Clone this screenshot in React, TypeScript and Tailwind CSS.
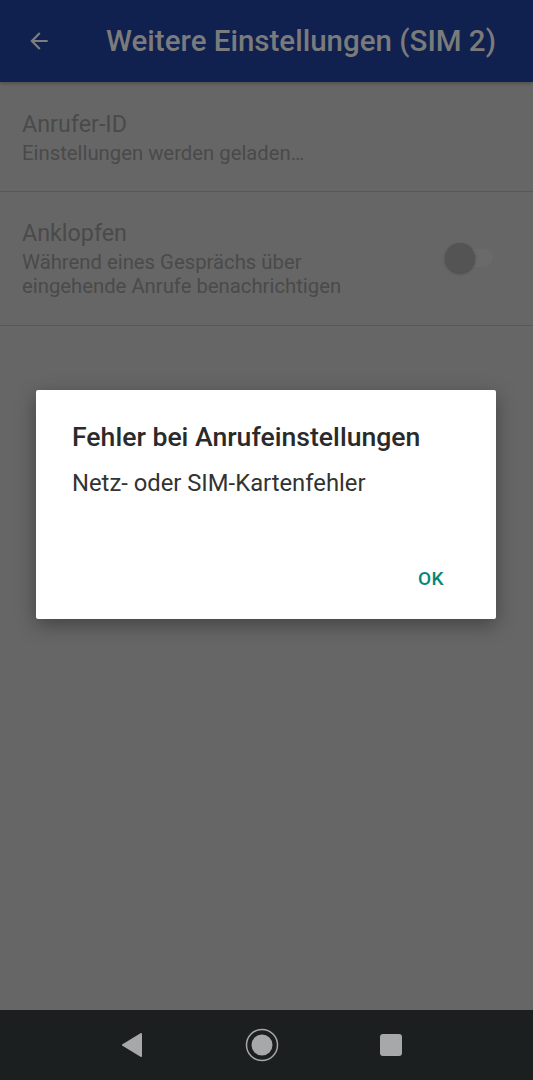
// App.tsx
// Call settings screen (SIM 2) with error dialog on top

const font = { fontFamily: "Roboto, 'Noto Sans', sans-serif" };

function SettingRow({
  title,
  summary,
  toggle,
  className,
}: {
  title: string;
  summary: string[];
  toggle?: boolean;
  className: string;
}) {
  return (
    <div className={`flex items-center border-b border-[#575757] pl-[22px] pr-[40px] ${className}`}>
      <div className="flex-1">
        <div className="text-[23.3px] leading-[30px] text-[#4a4a4a]">{title}</div>
        <div className="mt-[2px]">
          {summary.map((line) => (
            <div key={line} className="text-[20.3px] leading-[24px] text-[#4a4a4a]">
              {line}
            </div>
          ))}
        </div>
      </div>
      {toggle && (
        <div className="relative h-[18px] w-[48px] rounded-full bg-[#6a6a6a]">
          <div className="absolute left-0 top-[-6px] h-[30px] w-[30px] rounded-full bg-[#545454] shadow-[0_1px_3px_rgba(0,0,0,0.3)]" />
        </div>
      )}
    </div>
  );
}

export default function App() {
  return (
    <div className="relative flex h-[1080px] w-[533px] flex-col overflow-hidden bg-[#666666]" style={font}>
      {/* Toolbar (dimmed) */}
      <div className="flex h-[82px] items-center bg-[#10214f] shadow-[0_2px_3px_rgba(0,0,0,0.2)]">
        <svg className="ml-[26px] h-[26px] w-[26px]" viewBox="0 0 24 24" fill="#7d7d7d">
          <path d="M20 11H7.83l5.59-5.59L12 4l-8 8 8 8 1.41-1.41L7.83 13H20v-2z" />
        </svg>
        <div className="ml-[54px] whitespace-nowrap text-[29.5px] font-medium text-[#7b7b7b]">
          Weitere Einstellungen (SIM 2)
        </div>
      </div>

      <SettingRow className="pt-[27px] pb-[26px]" title="Anrufer-ID" summary={["Einstellungen werden geladen…"]} />
      <SettingRow
        className="pt-[26px] pb-[27px]"
        title="Anklopfen"
        summary={["Während eines Gesprächs über", "eingehende Anrufe benachrichtigen"]}
        toggle
      />

      <div className="flex-1" />

      {/* Navigation bar */}
      <div className="flex h-[70px] items-center justify-center gap-[101px] bg-[#1c1f20] pr-[12px]">
        <svg width="24" height="26" viewBox="0 0 24 26">
          <path d="M21 2 L3 13 L21 24 Z" fill="#a7a8a9" stroke="#a7a8a9" strokeWidth="2" strokeLinejoin="round" />
        </svg>
        <svg width="34" height="34" viewBox="0 0 34 34">
          <circle cx="17" cy="17" r="15.5" fill="none" stroke="#a7a8a9" strokeWidth="1.5" />
          <circle cx="17" cy="17" r="10.5" fill="#a7a8a9" />
        </svg>
        <div className="h-[22px] w-[22px] rounded-[3px] bg-[#a7a8a9]" />
      </div>

      {/* Dialog */}
      <div className="absolute left-[36px] top-[390px] flex h-[229px] w-[460px] flex-col rounded-[2px] bg-white shadow-[0_6px_20px_rgba(0,0,0,0.35)]">
        <div className="whitespace-nowrap pl-[36px] pt-[31px] text-[26.6px] font-medium leading-[32px] text-[#2a2a2a]">
          Fehler bei Anrufeinstellungen
        </div>
        <div className="pl-[36px] pt-[16px] text-[23.8px] leading-[28px] text-[#333333]">Netz- oder SIM-Kartenfehler</div>
        <div className="flex-1" />
        <div className="flex justify-end pb-[26px] pr-[52px]">
          <span className="text-[19px] font-medium tracking-[0.5px] text-[#00897b]">OK</span>
        </div>
      </div>
    </div>
  );
}
